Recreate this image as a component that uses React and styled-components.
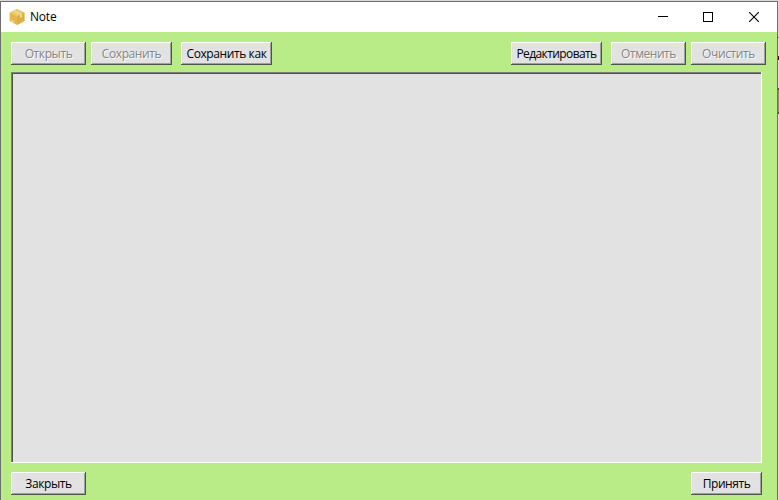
import React from 'react';
import styled, { createGlobalStyle } from 'styled-components';

const GlobalStyle = createGlobalStyle`
  * { box-sizing: border-box; }
  body { margin: 0; background: #dedede; overflow: hidden; }
`;

const Desktop = styled.div`
  width: 779px;
  height: 500px;
  padding-top: 1px;
  background: linear-gradient(#d9d9d9 0 37px, #777 37px 38px, #dedede 38px 56px, #501018 56px 60px, #dedede 60px 88px, #335c22 88px 90px, #65a844 90px 112px, #335c22 112px 114px, #dedede 114px);
  font-family: "Open Sans", "Noto Sans", sans-serif;
`;

const Window = styled.div`
  display: flex;
  flex-direction: column;
  width: 778px;
  height: 499px;
  border: 1px solid #6c6f6b;
  border-bottom: 0;
  background: #b9ec86;
`;

const TitleBar = styled.header`
  display: flex;
  align-items: center;
  height: 30px;
  padding-left: 8px;
  background: #fff;
`;

const Title = styled.span`
  flex: 1;
  margin-left: 5px;
  font-size: 12px;
  line-height: 16px;
  letter-spacing: -0.2px;
  color: #000;
`;

const Controls = styled.div`
  display: flex;
  height: 30px;
`;

const ControlButton = styled.button`
  display: flex;
  align-items: center;
  justify-content: center;
  width: ${(p) => p.$width}px;
  padding: 0;
  border: 0;
  background: transparent;
  color: #000;
`;

const Content = styled.main`
  padding: 10px 11px 0 10px;
`;

const ButtonRow = styled.div`
  display: flex;
  height: 23px;
`;

const PushButton = styled.button`
  width: ${(p) => p.$width}px;
  height: 23px;
  margin-left: ${(p) => (p.$push ? 'auto' : `${p.$gap || 0}px`)};
  margin-right: ${(p) => p.$end || 0}px;
  padding: 0;
  border: 0;
  background: #e2e2e2;
  box-shadow: inset -1px -1px #4f524e, inset 1px 1px #fff, inset -2px -2px #a0a0a0;
  font: 12px/23px "Open Sans", "Noto Sans", sans-serif;
  letter-spacing: ${(p) => p.$track || 0}px;
  white-space: nowrap;
  color: #000;

  &:disabled {
    color: #858585;
    text-shadow: 1px 1px #fafafa;
  }
`;

const Editor = styled.textarea`
  display: block;
  width: 751px;
  height: 391px;
  margin: 7px 0 9px;
  padding: 4px;
  border: 0;
  outline: 0;
  resize: none;
  background: #e2e2e2;
  box-shadow: inset -1px -1px #fff, inset 1px 1px #7c807a, inset 2px 2px #50524f;
  font: 12px "Open Sans", sans-serif;
`;

const BoxIcon = () => (
  <svg width="16" height="16" viewBox="0 0 16 16">
    <path d="M8 0 15.4 3.7V12L8 16 .6 12V3.7z" fill="#e5b84f" />
    <path d="M8 0 15.4 3.7 8 7.4.6 3.7z" fill="#edc868" />
    <path d="M8 7.4 15.4 3.7V12L8 16z" fill="#dfae45" />
    <path d="m3.6 2.2 2-1L13 5v3.1l-2 .9V5.9z" fill="#f2d88e" />
    <path d="m2.2 11 2.4 1.2v1.3l-2.4-1.2z" fill="#f8e6b3" />
  </svg>
);

export default function App() {
  return (
    <Desktop>
      <GlobalStyle />
      <Window>
        <TitleBar>
          <BoxIcon />
          <Title>Note</Title>
          <Controls>
            <ControlButton $width={44} aria-label="Minimize">
              <svg width="10" height="10" shapeRendering="crispEdges"><path d="M0 4h10v1H0z" /></svg>
            </ControlButton>
            <ControlButton $width={45} aria-label="Maximize">
              <svg width="10" height="10" shapeRendering="crispEdges"><path d="M.5.5h9v9h-9z" fill="none" stroke="currentColor" /></svg>
            </ControlButton>
            <ControlButton $width={47} aria-label="Close">
              <svg width="10" height="10"><path d="m0 0 10 10M10 0 0 10" stroke="currentColor" strokeWidth="1.1" /></svg>
            </ControlButton>
          </Controls>
        </TitleBar>
        <Content>
          <ButtonRow>
            <PushButton $width={75} $track={-0.4} disabled>Открыть</PushButton>
            <PushButton $width={81} $gap={5} $track={-0.4} disabled>Сохранить</PushButton>
            <PushButton $width={91} $gap={9} $track={-0.4}>Сохранить как</PushButton>
            <PushButton $width={91} $push $track={-0.6}>Редактировать</PushButton>
            <PushButton $width={75} $gap={9} $track={-0.45} disabled>Отменить</PushButton>
            <PushButton $width={75} $gap={5} $track={-0.4} disabled>Очистить</PushButton>
          </ButtonRow>
          <Editor aria-label="Note" spellCheck={false} />
          <ButtonRow>
            <PushButton $width={75} $track={-0.4}>Закрыть</PushButton>
            <PushButton $width={71} $push $end={4} $track={-0.45}>Принять</PushButton>
          </ButtonRow>
        </Content>
      </Window>
    </Desktop>
  );
}
